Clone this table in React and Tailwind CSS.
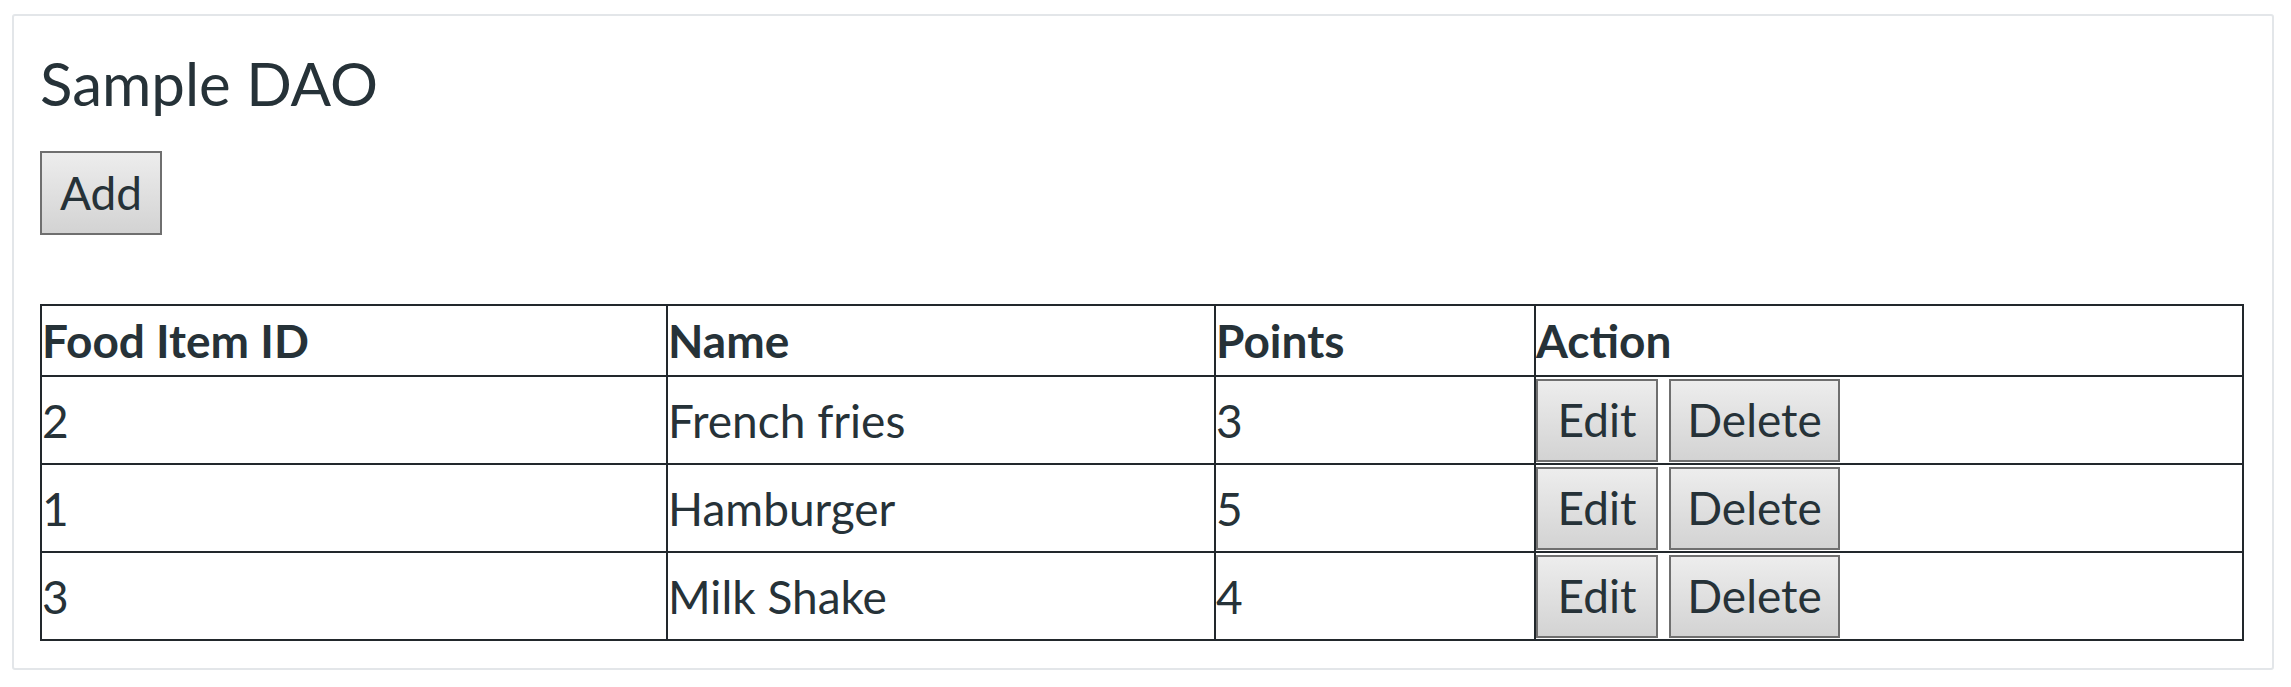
import { useState } from "react";

function ActionButton({ children, width }) {
  return (
    <button className={`${width} h-[83px] border-2 border-[#6f6f6f] bg-linear-to-b from-[#ededed] to-[#d3d3d3] text-[#263238] text-[46px] leading-none`}>
      {children}
    </button>
  );
}

export default function App() {
  let [items] = useState([
    { id: 2, name: "French fries", points: 3 },
    { id: 1, name: "Hamburger", points: 5 },
    { id: 3, name: "Milk Shake", points: 4 },
  ]);

  return (
    <div className="min-h-screen bg-white pt-[14px] pl-[12px] pr-[17px] text-[#263238] font-['Lato',sans-serif]">
      <div className="border-2 border-[#e3e6e9] rounded-[3px] px-[26px] pt-[29px] pb-[27px]">
        <h2 className="text-[60px] leading-[72px] h-[72px] pt-[2px]">Sample DAO</h2>

        <button className="mt-[34px] h-[84px] w-[122px] border-2 border-[#6f6f6f] bg-linear-to-b from-[#ededed] to-[#d3d3d3] text-[46px] leading-none">
          Add
        </button>

        <table className="mt-[69px] w-[2204px] table-fixed border border-[#22282c] border-separate border-spacing-0 text-[46px]">
          <thead>
            <tr className="h-[71px]">
              <th className="w-[626px] border border-[#22282c] p-0 text-left font-bold">Food Item ID</th>
              <th className="w-[548px] border border-[#22282c] p-0 text-left font-bold">Name</th>
              <th className="w-[320px] border border-[#22282c] p-0 text-left font-bold">Points</th>
              <th className="border border-[#22282c] p-0 text-left font-bold">Action</th>
            </tr>
          </thead>
          <tbody>
            {items.map((item) => (
              <tr key={item.id} className="h-[88px]">
                <td className="border border-[#22282c] p-0">{item.id}</td>
                <td className="border border-[#22282c] p-0">{item.name}</td>
                <td className="border border-[#22282c] p-0">{item.points}</td>
                <td className="border border-[#22282c] p-0">
                  <div className="flex gap-[11px]">
                    <ActionButton width="w-[122px]">Edit</ActionButton>
                    <ActionButton width="w-[171px]">Delete</ActionButton>
                  </div>
                </td>
              </tr>
            ))}
          </tbody>
        </table>
      </div>
    </div>
  );
}
